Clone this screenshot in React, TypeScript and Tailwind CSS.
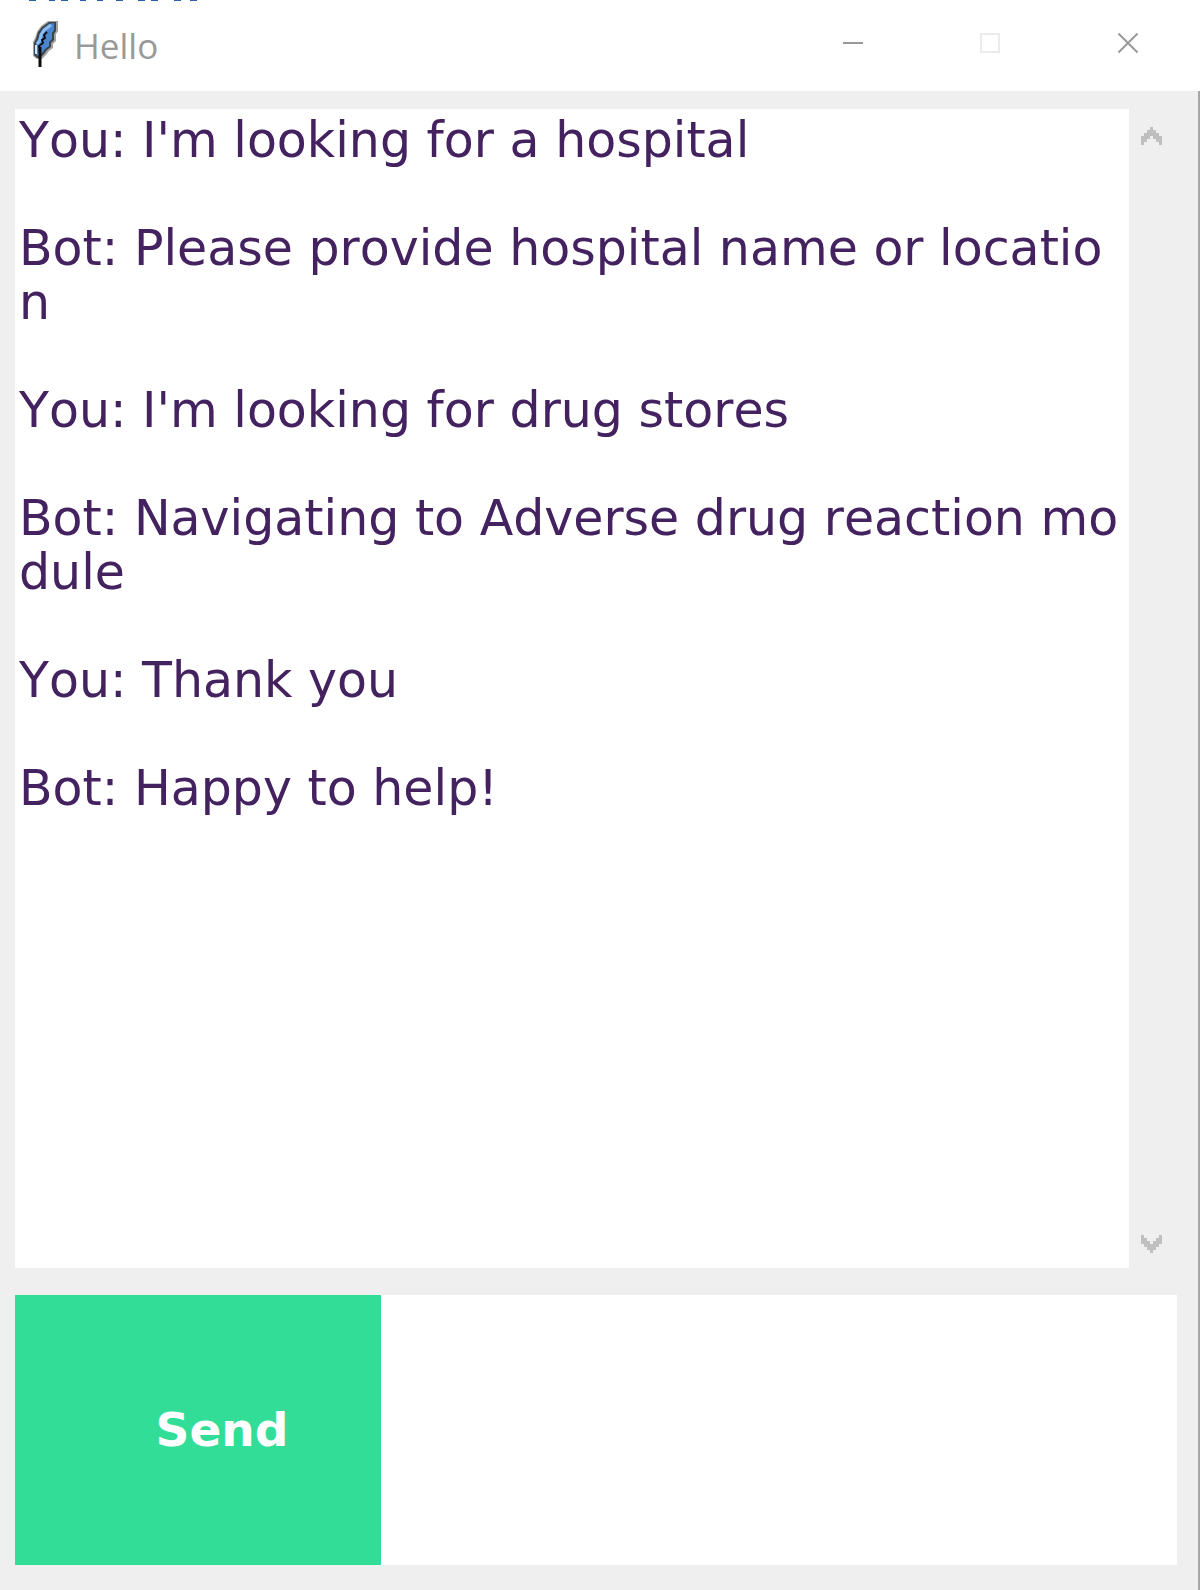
const messages = [
  { from: "You", text: "I'm looking for a hospital" },
  { from: "Bot", text: "Please provide hospital name or location" },
  { from: "You", text: "I'm looking for drug stores" },
  { from: "Bot", text: "Navigating to Adverse drug reaction module" },
  { from: "You", text: "Thank you" },
  { from: "Bot", text: "Happy to help!" },
];

function Feather() {
  return (
    <svg className="h-12 w-7 shrink-0" viewBox="0 0 28 48" aria-hidden="true">
      <path d="M16 1 H26 V11 L24 14 V21 L21 24 V28 L17 31 L14 35 L10 39 H5 L1 36 V22 L3 18 L5 12 L9 6 Z" fill="#a3a3a0" />
      <path d="M17 2 H24 V11 L22 14 V20 L19 23 V27 L15 30 L12 34 L8 38 H5 L2 35 V23 L4 19 L6 12 L10 7 Z" fill="#3b4450" />
      <path d="M17 4 L22 3 V10 L20 13 V19 L17 22 V26 L13 29 L10 33 L6 36 L4 34 V24 L6 20 L8 13 L11 9 Z" fill="#4a86d0" />
      <path d="M19 5 L12 10 L9 15 L8 20 L5 24" fill="none" stroke="#8dbcf0" strokeWidth="3" />
      <path d="M4 25 V34" stroke="#dce5ec" strokeWidth="2" />
      <path d="M15 12 L12 15 L13 18 L10 20 L11 23 L7 26 L8 29 L7 31" fill="none" stroke="#0c1016" strokeWidth="2" />
      <path d="M8 27 V47" fill="none" stroke="#0c0c0c" strokeWidth="3" />
    </svg>
  );
}

function Chevron({ down = false }: { down?: boolean }) {
  return (
    <svg className="h-[18px] w-[21px]" viewBox="0 0 7 6" shapeRendering="crispEdges" aria-hidden="true">
      <path
        fill="#bfbfbf"
        d={
          down
            ? "M0 0H1V1H2V2H3V3H4V2H5V1H6V0H7V3H6V4H5V5H4V6H3V5H2V4H1V3H0Z"
            : "M3 0H4V1H5V2H6V3H7V6H6V5H5V4H4V3H3V4H2V5H1V6H0V3H1V2H2V1H3Z"
        }
      />
    </svg>
  );
}

export default function App() {
  return (
    <div className="flex min-h-screen flex-col bg-[#efefef] font-['DejaVu_Sans',sans-serif]">
      <header className="relative flex h-[91px] items-start bg-white">
        <svg className="absolute left-0 top-0 h-px w-[210px]" viewBox="0 0 210 1" aria-hidden="true">
          <path
            d="M29 .5h7M49 .5h6M61 .5h7M80 .5h6M97 .5h6M116 .5h7M138 .5h7M151 .5h7M174 .5h7M190 .5h7"
            stroke="#2c5ea6"
          />
        </svg>
        <div className="flex flex-1 items-start gap-[14px] pl-8 pt-5">
          <Feather />
          <h1 className="pt-0.5 font-['Open_Sans',sans-serif] text-[35px] leading-[48px] text-[#999999]">Hello</h1>
        </div>
        <div className="flex h-[86px] text-[#999999]">
          <button type="button" aria-label="Minimize" className="flex w-[142px] items-center justify-center">
            <svg width="20" height="20" viewBox="0 0 20 20" shapeRendering="crispEdges"><path d="M0 10H20" stroke="currentColor" strokeWidth="2" /></svg>
          </button>
          <button type="button" aria-label="Maximize" disabled className="flex w-[132px] items-center justify-center">
            <svg width="20" height="20" viewBox="0 0 20 20" shapeRendering="crispEdges"><path d="M1 1H19V19H1Z" fill="none" stroke="#ebebeb" strokeWidth="2" /></svg>
          </button>
          <button type="button" aria-label="Close" className="flex w-36 items-center justify-center">
            <svg width="20" height="20" viewBox="0 0 20 20"><path d="M0.5 0.5L19.5 19.5M19.5 0.5L0.5 19.5" stroke="currentColor" strokeWidth="2" /></svg>
          </button>
        </div>
      </header>

      <main className="flex flex-1 flex-col gap-[27px] border-r-2 border-[#a6a6a6] pb-[25px] pl-[15px] pr-[21px] pt-[18px]">
        <div className="flex flex-1">
          <div role="log" className="flex flex-1 flex-col gap-[54px] bg-white pl-1 pt-[5px] text-[49px] leading-[54px] text-[#43225f] [font-kerning:none]">
            {messages.map((m) => (
              <p key={m.text} className="break-all">{`${m.from}: ${m.text}`}</p>
            ))}
          </div>
          <div className="flex w-12 flex-col items-center justify-between pb-[15px] pr-[3px] pt-[18px]">
            <button type="button" aria-label="Scroll up"><Chevron /></button>
            <button type="button" aria-label="Scroll down"><Chevron down /></button>
          </div>
        </div>

        <form className="flex h-[270px]" onSubmit={(e) => e.preventDefault()}>
          <button type="submit" className="w-[366px] bg-[#32de97] pl-12 text-[47px] font-bold text-white">
            Send
          </button>
          <textarea aria-label="Message" className="flex-1 resize-none bg-white p-1 text-[49px] leading-[54px] text-[#43225f] outline-none" />
        </form>
      </main>
    </div>
  );
}
